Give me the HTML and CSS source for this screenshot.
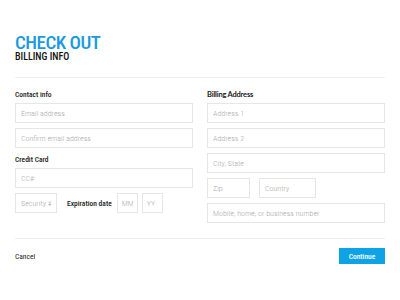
FILE: index.html
```html
<!DOCTYPE html>
<html lang="en">
<head>
  <meta charset="UTF-8">
  <title>Check Out</title>
  <link rel="stylesheet" href="styles.css">
</head>
<body>
  <div class="page">
    <header class="head">
      <h1>CHECK OUT</h1>
      <h2>BILLING INFO</h2>
    </header>

    <form class="billing">
      <div class="col">
        <label class="group">Contact info</label>
        <input type="email" placeholder="Email address">
        <input type="email" placeholder="Confirm email address">

        <label class="group">Credit Card</label>
        <input type="text" placeholder="CC#">
        <div class="row">
          <input type="text" class="sec" placeholder="Security #">
          <span class="exp">Expiration date</span>
          <input type="text" class="small" placeholder="MM">
          <input type="text" class="small" placeholder="YY">
        </div>
      </div>

      <div class="col">
        <label class="group alt">Billing Address</label>
        <input type="text" placeholder="Address 1">
        <input type="text" placeholder="Address 2">
        <input type="text" placeholder="City, State">
        <div class="row">
          <input type="text" class="zip" placeholder="Zip">
          <input type="text" class="country" placeholder="Country">
        </div>
        <input type="tel" placeholder="Mobile, home, or business number">
      </div>
    </form>

    <footer class="foot">
      <a href="#" class="cancel">Cancel</a>
      <button type="button" class="continue">Continue</button>
    </footer>
  </div>
</body>
</html>
```

FILE: styles.css
```css
body {
  margin: 0;
  background: #fff;
  font-family: "Roboto Condensed", Roboto, "Liberation Sans", sans-serif;
  color: #222;
}
.page {
  padding: 0 15px;
}
.head {
  padding-top: 33px;
  padding-bottom: 15px;
  border-bottom: 1px solid #eeeeee;
}
h1 {
  margin: 0;
  font-size: 19px;
  line-height: 19px;
  font-weight: 500;
  letter-spacing: -0.5px;
  color: #1a9ae0;
}
h2 {
  margin: 0;
  font-size: 10px;
  line-height: 10px;
  font-weight: 500;
  color: #111;
}
.billing {
  display: grid;
  grid-template-columns: 1fr 1fr;
  column-gap: 14px;
  padding-top: 10px;
  padding-bottom: 15px;
  border-bottom: 1px solid #eeeeee;
}
.col {
  display: flex;
  flex-direction: column;
  gap: 5px;
}
.group {
  display: block;
  height: 15px;
  line-height: 13px;
  margin-bottom: -5px;
  font-size: 7.5px;
  font-weight: 500;
  color: #1a1a1a;
}
.group.alt {
  font-family: Lato, "Liberation Sans", sans-serif;
  font-weight: 700;
  letter-spacing: -0.2px;
}
input {
  box-sizing: border-box;
  height: 20px;
  width: 100%;
  margin: 0;
  padding: 0 5px;
  border: 1px solid #e6e6e6;
  border-radius: 0;
  font-family: inherit;
  font-size: 8px;
  font-weight: 300;
  color: #333;
  outline: none;
}
input::placeholder {
  color: #aaaaaa;
}
.row {
  display: flex;
  align-items: center;
}
.sec {
  width: 42px;
}
.exp {
  margin: 0 5px 0 10px;
  font-size: 7.5px;
  font-weight: 500;
  color: #1a1a1a;
  white-space: nowrap;
}
.small {
  width: 21px;
  padding: 0 4px;
}
.small + .small {
  margin-left: 4px;
}
.zip {
  width: 43px;
}
.country {
  width: 57px;
  margin-left: 9px;
}
.foot {
  display: flex;
  justify-content: space-between;
  align-items: center;
  padding-top: 9px;
}
.cancel {
  font-size: 7.5px;
  color: #222;
  text-decoration: none;
}
.continue {
  height: 16px;
  width: 46px;
  padding: 0;
  border: none;
  background: #0ea3e6;
  color: #fff;
  font-family: inherit;
  font-size: 7.5px;
  font-weight: 500;
}
```
